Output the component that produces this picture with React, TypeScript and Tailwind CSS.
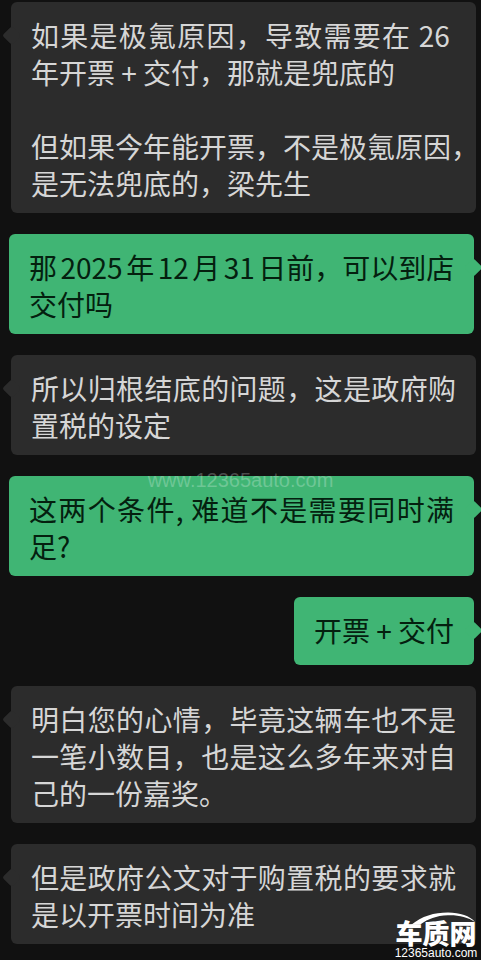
import clsx from "clsx";

interface Message {
  id: number;
  from: "agent" | "me";
  paragraphs: string[];
  watermark?: boolean;
}

const messages: Message[] = [
  {
    id: 1,
    from: "agent",
    paragraphs: [
      "如果是极氪原因，导致需要在 26\u00a0\u200b年开票 + 交付，那就是兜底的",
      "",
      "但如果今年能开票，不是极氪原因，\n是无法兜底的，梁先生",
    ],
  },
  { id: 2, from: "me", paragraphs: ["那2025年12月31日前，可以到店\n交付吗"] },
  { id: 3, from: "agent", paragraphs: ["所以归根结底的问题，这是政府购置税的设定"] },
  { id: 4, from: "me", paragraphs: ["这两个条件, 难道不是需要同时满足?"], watermark: true },
  { id: 5, from: "me", paragraphs: ["开票 + 交付"] },
  {
    id: 6,
    from: "agent",
    paragraphs: ["明白您的心情，毕竟这辆车也不是一笔小数目，也是这么多年来对自己的一份嘉奖。"],
  },
  { id: 7, from: "agent", paragraphs: ["但是政府公文对于购置税的要求就是以开票时间为准"] },
];

function Bubble({ message }: { message: Message }) {
  const mine = message.from === "me";
  const long = message.paragraphs.join("").length > 15;

  return (
    <li className={clsx("relative flex", mine ? "justify-end pr-[7px] pl-[9px]" : "pr-[5px] pl-[11px]")}>
      <div
        className={clsx(
          "relative min-h-[68px] min-w-0 rounded-md px-5 pt-[15px] pb-[11px]",
          long && "w-full",
          mine ? "bg-[#40b574] text-[#04200f]" : "bg-[#2c2c2c] text-[#d6d6d6]"
        )}
      >
        <span
          className={clsx(
            "absolute top-[27px] size-[13px] rotate-45 rounded-[2px]",
            mine ? "-right-[6px] bg-[#40b574]" : "-left-[6px] bg-[#2c2c2c]"
          )}
        />
        {message.paragraphs.map((text, i) => (
          // a paragraph with its own line breaks lets the closing comma hang past the edge
          <p
            key={i}
            className={clsx(
              "relative min-h-[37px] text-justify text-[28px] leading-[37px] [text-autospace:normal]",
              text.includes("\n") && "whitespace-pre"
            )}
          >
            {text}
          </p>
        ))}
      </div>
      {message.watermark && (
        <span className="absolute inset-x-0 -top-2 text-center font-['Liberation_Sans',sans-serif] text-[20px] leading-6 text-white/25">
          www.12365auto.com
        </span>
      )}
    </li>
  );
}

function SiteMark() {
  return (
    <div className="absolute right-[3px] bottom-0 flex flex-col items-center text-white">
      <svg viewBox="0 0 84 14" className="-mb-[6px] h-[14px] w-[84px]" fill="currentColor">
        <path d="M17 13 C28 4 40 0.5 54 0.5 C66 0.5 76 4 81 10 C74 5 64 2.8 54 3.2 C42 3.6 34 7 27 12 Z" />
      </svg>
      <span className="text-[27px] leading-[26px] font-black">车质网</span>
      <span className="font-['Liberation_Sans',sans-serif] text-[12px] leading-[14px]">12365auto.com</span>
    </div>
  );
}

export default function App() {
  return (
    <main className="relative min-h-screen overflow-hidden bg-[#111111] pt-[2px] pb-4 font-['Noto_Sans_CJK_SC',sans-serif]">
      <ul className="flex flex-col gap-[21px]">
        {messages.map((message) => (
          <Bubble key={message.id} message={message} />
        ))}
      </ul>
      <SiteMark />
    </main>
  );
}
